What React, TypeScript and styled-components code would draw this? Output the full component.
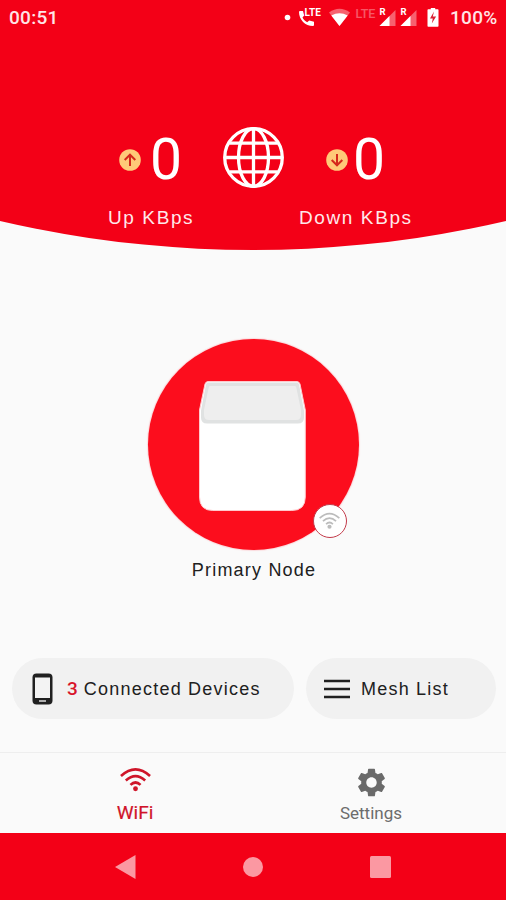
import React from "react";
import styled, { createGlobalStyle } from "styled-components";

const GlobalStyle = createGlobalStyle`
  * { box-sizing: border-box; }
  body { margin: 0; background: #fafafa; }
  svg { display: block; flex: none; }
`;

const Screen = styled.div`
  width: 506px;
  height: 900px;
  display: flex;
  flex-direction: column;
  overflow: hidden;
  background: #fafafa;
  color: #202020;
  font-family: "Liberation Sans", Arial, sans-serif;
`;

const Header = styled.header`
  height: 250px;
  flex: none;
  display: flex;
  flex-direction: column;
  background: #f30017;
  color: #fff;
  clip-path: circle(1118px at 50% -868px);
`;

const StatusBar = styled.div`
  height: 36px;
  padding: 0 7px 0 9px;
  display: flex;
  align-items: center;
  justify-content: space-between;
  font: 500 19px/36px Roboto, sans-serif;
  letter-spacing: 0.3px;
  color: #ffe4e6;
`;

const StatusGroup = styled.div`
  display: flex;
  align-items: center;
`;

const Percent = styled.span`
  width: 49px;
  letter-spacing: 0.3px;
  font-size: 19px;
  white-space: nowrap;
`;

const Traffic = styled.div`
  display: grid;
  grid-template-columns: 115px 76px 115px;
  padding: 90px 0 0 108px;
`;

const Meter = styled.div`
  display: flex;
  flex-direction: column;
`;

const Reading = styled.div<{ $indent: number; $gap: number }>`
  height: 68px;
  padding-left: ${(p) => p.$indent}px;
  display: flex;
  align-items: center;
  gap: ${(p) => p.$gap}px;
`;

const Value = styled.span`
  font: 400 57px/68px Roboto, sans-serif;
`;

const Unit = styled.span`
  margin-top: 12px;
  font-size: 19px;
  line-height: 24px;
  letter-spacing: 1.6px;
  color: #ffe8ea;
  white-space: nowrap;
`;

const GlobeSlot = styled.div`
  padding-top: 1px;
`;

const Main = styled.main`
  height: 502px;
  flex: none;
  display: flex;
  flex-direction: column;
  justify-content: space-between;
  padding: 89px 10px 33px 12px;
`;

const Node = styled.section`
  display: flex;
  flex-direction: column;
  align-items: center;
`;

const NodeDisc = styled.div`
  position: relative;
  width: 211px;
  height: 211px;
  margin-right: 2px;
  border-radius: 50%;
  background: #fc0d1d;
  box-shadow: 0 0 1px 1px #fbd9dc;
  display: flex;
  justify-content: center;
  padding: 41px 2px 0 0;
`;

const SignalBadge = styled.div`
  position: absolute;
  right: 12px;
  bottom: 12px;
  width: 34px;
  height: 34px;
  border: 1px solid #c33a4a;
  border-radius: 50%;
  background: #fff;
  display: flex;
  justify-content: center;
  padding-top: 7px;
`;

const NodeName = styled.div`
  margin-top: 8px;
  font-size: 18px;
  line-height: 24px;
  letter-spacing: 1.2px;
`;

const Actions = styled.div`
  display: grid;
  grid-template-columns: 282px 190px;
  gap: 12px;
`;

const ActionButton = styled.button<{ $gap: number; $pad: number }>`
  height: 61px;
  padding: 0 0 0 ${(p) => p.$pad}px;
  border: 0;
  border-radius: 31px;
  background: #f1f1f1;
  display: flex;
  align-items: center;
  gap: ${(p) => p.$gap}px;
  font-family: inherit;
  font-size: 18px;
  line-height: 24px;
  letter-spacing: 1.22px;
  color: #202020;
  white-space: nowrap;
`;

const Count = styled.span`
  margin-right: 6px;
  font: 500 19px/20px Roboto, sans-serif;
  letter-spacing: 0;
  color: #d8142a;
`;

const Tabs = styled.nav`
  height: 81px;
  flex: none;
  border-top: 1px solid #eeeeee;
  display: grid;
  grid-template-columns: 236px 236px;
  padding-left: 17px;
`;

const Tab = styled.div`
  display: flex;
  flex-direction: column;
  align-items: center;
`;

const TabIcon = styled.div<{ $top: number }>`
  height: 48px;
  padding-top: ${(p) => p.$top}px;
`;

const TabLabel = styled.span<{ $active?: boolean }>`
  font-family: Roboto, sans-serif;
  font-size: ${(p) => (p.$active ? 19 : 17)}px;
  line-height: 24px;
  color: ${(p) => (p.$active ? "#d0142a" : "#6c6c6c")};
  -webkit-text-stroke: ${(p) => (p.$active ? "0.2px #d0142a" : "0")};
`;

const NavBar = styled.footer`
  height: 67px;
  flex: none;
  background: #f30017;
  display: flex;
  align-items: center;
  justify-content: space-between;
  padding: 0 115px;
`;

function ArrowBadge({ down = false }: { down?: boolean }) {
  return (
    <svg width="22" height="22" viewBox="0 0 22 22">
      <circle cx="11" cy="11" r="10.8" fill="#ffc978" />
      <path
        d={down ? "M11 5v11M5.7 11 11 16.3 16.3 11" : "M11 17V6M5.7 11 11 5.7 16.3 11"}
        fill="none"
        stroke="#d5281c"
        strokeWidth="2"
      />
    </svg>
  );
}

function Globe() {
  return (
    <svg width="61" height="61" viewBox="0 0 61 61" fill="none" stroke="#fff" strokeWidth="3.3">
      <circle cx="30.5" cy="30.5" r="28.8" />
      <ellipse cx="30.5" cy="30.5" rx="15" ry="28.8" />
      <path d="M30.5 2v57M2 30.5h57M6.5 16.2h48M6.5 44.8h48" />
    </svg>
  );
}

function StatusIcons() {
  return (
    <svg width="166" height="36" viewBox="0 0 166 36" fill="#fff">
      <circle cx="3.5" cy="17.5" r="2.8" />
      <path d="M15 12q0-1 1-1h3l1.2 4.6-1.7 2c1.1 2.2 2.500 3.600 4.700 4.600l2-1.800 4.800 1.400v3.200q0 1-1 1c-7.800 0-14-6.200-14-14Z" />
      <text x="20.500" y="15.800" fontFamily="Roboto" fontWeight="700" fontSize="10" letterSpacing="0.1">LTE</text>
      <path d="M45 12.500q10.500-7.500 21 0L55.500 26Z" opacity=".38" />
      <path d="M47.300 15.600q8.200-4.800 16.400 0L55.500 26Z" />
      <text x="71.500" y="18" fontFamily="Roboto" fontWeight="500" fontSize="12.500" letterSpacing="0" opacity=".34">LTE</text>
      <path d="M111.500 10v16H95.500Z" opacity=".38" />
      <path d="M105.500 16v10H95.500Z" />
      <path d="M132.500 10v16h-16Z" opacity=".38" />
      <path d="M126.500 16v10h-10Z" />
      <text x="95.500" y="15" fontFamily="Roboto" fontWeight="700" fontSize="9.500">R</text>
      <text x="116.500" y="15" fontFamily="Roboto" fontWeight="700" fontSize="9.500">R</text>
      <path d="M143.500 10q0-.8.8-.8h2.500V8h4.400v1.200h2.500q.8 0 .8.800v16q0 .8-.8.800h-9.400q-.8 0-.8-.8Z" />
      <path d="m150 11.500-4 7h2.800l-1 5 4.300-7h-3.300Z" fill="#d92134" />
    </svg>
  );
}

function RouterBox() {
  return (
    <svg width="109" height="133" viewBox="0 0 109 133">
      <path d="M7 4Q7.800 1.500 10 1.500h89q2.200 0 3 2.500l5.300 26v87q0 13.500-13.500 13.500h-79Q1.500 130.500 1.500 117V30Z" fill="#fff" stroke="#ffc8cc" />
      <path d="M10 2.500h89q1.500 0 2 2l5 26v7q0 6-6 6H9q-6 0-6-6v-7l5-26q.5-2 2-2Z" fill="#e0e2e2" />
      <path d="M12 6h85q1 0 1.400 2l4.600 22v5q0 5-5 5H11q-5 0-5-5v-5L10.600 8Q11 6 12 6Z" fill="#eee" />
    </svg>
  );
}

function WifiIcon({ size, color, weight, dot }: { size: number; color: string; weight: number; dot: number }) {
  return (
    <svg width={size} height={size * 0.8} viewBox="0 0 32 25.600" fill="none" stroke={color} strokeWidth={weight}>
      <path d="M1 9.200Q16-4.500 31 9.200M6 14q10-9 20 0M10.800 18.500q5.200-5 10.400 0" />
      <circle cx="16" cy="22.500" r={dot} fill={color} stroke="none" />
    </svg>
  );
}

function PhoneIcon() {
  return (
    <svg width="21" height="32" viewBox="0 0 21 32">
      <rect x=".5" y=".5" width="20" height="31" rx="4" fill="#202020" />
      <path d="M3 4.500h15v20.500H3Z" fill="#f3f3f3" />
      <path d="M7 28h7" stroke="#ddd" strokeWidth="1.500" />
    </svg>
  );
}

function MenuIcon() {
  return (
    <svg width="26" height="20" viewBox="0 0 26 20" stroke="#202020" strokeWidth="2.600">
      <path d="M0 2h26M0 10h26M0 18h26" />
    </svg>
  );
}

function GearIcon() {
  return (
    <svg width="33" height="33" viewBox="0 0 24 24" fill="#6a6a6a">
      <path d="M19.430 12.980c.04-.32.070-.64.070-.98s-.03-.66-.07-.98l2.110-1.650c.19-.15.240-.42.120-.64l-2-3.460c-.12-.22-.39-.3-.61-.22l-2.490 1c-.52-.4-1.080-.73-1.690-.98l-.38-2.650C14.460 2.180 14.250 2 14 2h-4c-.25 0-.46.180-.49.420l-.38 2.650c-.61.250-1.170.59-1.690.98l-2.490-1c-.23-.09-.49 0-.61.220l-2 3.460c-.13.220-.07.490.120.640l2.110 1.650c-.04.32-.07.650-.07.980s.03.660.07.980l-2.110 1.650c-.19.150-.24.420-.12.640l2 3.460c.12.220.39.300.61.220l2.490-1c.52.400 1.080.730 1.690.980l.38 2.650c.03.240.240.420.490.420h4c.25 0 .46-.18.490-.42l.38-2.650c.61-.25 1.170-.59 1.690-.98l2.490 1c.23.090.49 0 .61-.22l2-3.460c.12-.22.070-.49-.12-.64l-2.110-1.650ZM12 15.800c-2.100 0-3.800-1.700-3.800-3.800s1.700-3.800 3.800-3.800 3.800 1.700 3.800 3.800-1.700 3.800-3.800 3.800Z" />
    </svg>
  );
}

export default function App() {
  return (
    <>
      <GlobalStyle />
      <Screen>
        <Header>
          <StatusBar>
            <span>00:51</span>
            <StatusGroup>
              <StatusIcons />
              <Percent>100%</Percent>
            </StatusGroup>
          </StatusBar>
          <Traffic>
            <Meter>
              <Reading $indent={11} $gap={9}>
                <ArrowBadge />
                <Value>0</Value>
              </Reading>
              <Unit>Up KBps</Unit>
            </Meter>
            <GlobeSlot>
              <Globe />
            </GlobeSlot>
            <Meter>
              <Reading $indent={27} $gap={5}>
                <ArrowBadge down />
                <Value>0</Value>
              </Reading>
              <Unit>Down KBps</Unit>
            </Meter>
          </Traffic>
        </Header>
        <Main>
          <Node>
            <NodeDisc>
              <RouterBox />
              <SignalBadge>
                <WifiIcon size={21} color="#bcbcbc" weight={2.6} dot={3.2} />
              </SignalBadge>
            </NodeDisc>
            <NodeName>Primary Node</NodeName>
          </Node>
          <Actions>
            <ActionButton $pad={20} $gap={14}>
              <PhoneIcon />
              <span>
                <Count>3</Count>Connected Devices
              </span>
            </ActionButton>
            <ActionButton $pad={18} $gap={11}>
              <MenuIcon />
              <span>Mesh List</span>
            </ActionButton>
          </Actions>
        </Main>
        <Tabs>
          <Tab>
            <TabIcon $top={14}>
              <WifiIcon size={31} color="#cf1529" weight={2.7} dot={2.5} />
            </TabIcon>
            <TabLabel $active>WiFi</TabLabel>
          </Tab>
          <Tab>
            <TabIcon $top={13}>
              <GearIcon />
            </TabIcon>
            <TabLabel>Settings</TabLabel>
          </Tab>
        </Tabs>
        <NavBar>
          <svg width="21" height="24" viewBox="0 0 21 24" fill="#fb98a2">
            <path d="M0 12 20.500 0v24Z" />
          </svg>
          <svg width="20" height="20" viewBox="0 0 20 20" fill="#fb98a2">
            <circle cx="10" cy="10" r="10" />
          </svg>
          <svg width="21" height="22" viewBox="0 0 21 22" fill="#fb98a2">
            <rect width="21" height="22" rx="1.500" />
          </svg>
        </NavBar>
      </Screen>
    </>
  );
}
